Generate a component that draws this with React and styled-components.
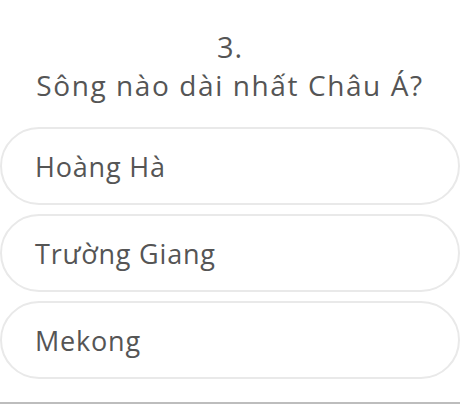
import React, { useState } from 'react';
import styled, { createGlobalStyle } from 'styled-components';

const GlobalStyle = createGlobalStyle`
    html, body {
        margin: 0;
        padding: 0;
        background: #ffffff;
    }
    body {
        font-family: "Open Sans", "Noto Sans", "Liberation Sans", sans-serif;
        color: #555555;
    }
`

const Wrapper = styled.div`
    width: 460px;
    box-sizing: border-box;
`

const Question = styled.div`
    padding-top: 28px;
    text-align: center;
    font-size: 28px;
    line-height: 38px;
    letter-spacing: 1.6px;
    color: #555555;
    margin-bottom: 23px;
`

const Number = styled.div`
    font-size: 29px;
    letter-spacing: 0.8px;
`

const Options = styled.div`
    display: flex;
    flex-direction: column;
    gap: 9px;
`

const Option = styled.button`
    display: flex;
    align-items: center;
    width: 460px;
    height: 78px;
    box-sizing: border-box;
    padding: 0 0 0 33px;
    border: 2px solid ${props => props.selected ? '#226bef' : '#e9e9e9'};
    border-radius: 39px;
    background: #ffffff;
    font-family: inherit;
    font-size: 27px;
    letter-spacing: 0.8px;
    color: #555555;
    text-align: left;
    cursor: pointer;
`

const Divider = styled.div`
    margin-top: 23px;
    height: 2px;
    background: #bdbdbd;
`

const App = () => {
    const [selected, setSelected] = useState(-1);
    const answers = ['Hoàng Hà', 'Trường Giang', 'Mekong'];

    return (
        <Wrapper>
            <GlobalStyle />
            <Question>
                <Number>3.</Number>
                <div>Sông nào dài nhất Châu Á?</div>
            </Question>
            <Options>
                {
                    answers.map((answer, index) => (
                        <Option key={index} selected={index === selected} onClick={() => setSelected(index)}>
                            {answer}
                        </Option>
                    ))
                }
            </Options>
            <Divider />
        </Wrapper>
    )
}

export default App;
